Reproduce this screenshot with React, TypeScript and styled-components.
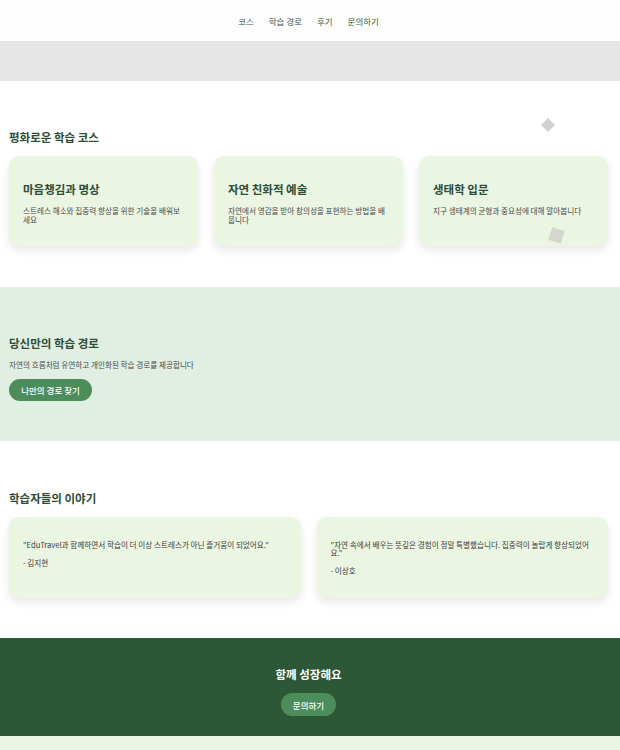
import React from "react";
import styled, { createGlobalStyle } from "styled-components";

const GlobalStyle = createGlobalStyle`
  html, body {
    margin: 0;
    padding: 0;
    background: #eaf5e3;
    font-family: "Noto Sans CJK KR", "Noto Sans", sans-serif;
  }
  * { box-sizing: border-box; }
`;

const Page = styled.div`
  width: 620px;
  position: relative;
`;

const Nav = styled.nav`
  height: 41px;
  background: #fdfdfd;
  display: flex;
  justify-content: center;
  align-items: center;
  gap: 15px;
  padding-right: 3px;
`;

const NavLink = styled.a`
  font-size: 8.5px;
  color: #3d5a43;
  text-decoration: none;
`;

const Hero = styled.div`
  height: 40px;
  background: #e5e5e5;
`;

const Section = styled.section<{ $bg: string; $pt: number; $pb: number }>`
  background: ${(p) => p.$bg};
  padding: ${(p) => p.$pt}px 12px ${(p) => p.$pb}px 9px;
  position: relative;
`;

const Title = styled.h2<{ $mb: number }>`
  margin: 0 0 ${(p) => p.$mb}px;
  font-size: 11.5px;
  line-height: 14px;
  font-weight: 700;
  color: #2e4d36;
`;

const CourseGrid = styled.div`
  display: grid;
  grid-template-columns: repeat(3, 1fr);
  gap: 16px;
`;

const Card = styled.div<{ $h: number; $pt: number }>`
  height: ${(p) => p.$h}px;
  background: #eaf5e2;
  border-radius: 10px;
  box-shadow: 0 4px 10px rgba(0, 0, 0, 0.1);
  padding: ${(p) => p.$pt}px 14px 0;
  position: relative;
`;

const CardTitle = styled.h3`
  margin: 0 0 9px;
  font-size: 11.5px;
  line-height: 16px;
  font-weight: 700;
  color: #2e4d36;
`;

const Desc = styled.p`
  margin: 0;
  font-size: 7.6px;
  line-height: 9px;
  color: #4a4a4a;
`;

const Sub = styled.p`
  margin: 0 0 9px;
  font-size: 7.6px;
  line-height: 10px;
  color: #4a4a4a;
`;

const PillButton = styled.button<{ $w: number; $h: number }>`
  display: block;
  width: ${(p) => p.$w}px;
  height: ${(p) => p.$h}px;
  border: none;
  border-radius: 999px;
  background: #4c8d5b;
  color: #ffffff;
  font-family: inherit;
  font-size: 8.5px;
  font-weight: 500;
  padding: 0;
`;

const ReviewGrid = styled.div`
  display: grid;
  grid-template-columns: 1fr 1fr;
  gap: 16px;
`;

const Quote = styled.p`
  margin: 0 0 10px;
  font-size: 7.6px;
  line-height: 8px;
  color: #3c3c3c;
`;

const Author = styled.p`
  margin: 0;
  font-size: 7.6px;
  line-height: 8px;
  color: #3c3c3c;
`;

const Footer = styled.footer`
  background: #2c5836;
  height: 98px;
  display: flex;
  flex-direction: column;
  align-items: center;
  padding: 28px 3px 0 0;
  gap: 11px;
`;

const FooterTitle = styled.h2`
  margin: 0;
  font-size: 11.5px;
  line-height: 16px;
  font-weight: 700;
  color: #ffffff;
`;

const Diamond = styled.div<{ $top: number; $left: number; $size: number; $rot: number; $alpha: number }>`
  position: absolute;
  top: ${(p) => p.$top}px;
  left: ${(p) => p.$left}px;
  width: ${(p) => p.$size}px;
  height: ${(p) => p.$size}px;
  background: rgba(195, 195, 195, ${(p) => p.$alpha});
  transform: rotate(${(p) => p.$rot}deg);
`;

const courses = [
  { title: "마음챙김과 명상", desc: "스트레스 해소와 집중력 향상을 위한 기술을 배워보세요" },
  { title: "자연 친화적 예술", desc: "자연에서 영감을 받아 창의성을 표현하는 방법을 배웁니다" },
  { title: "생태학 입문", desc: "지구 생태계의 균형과 중요성에 대해 알아봅니다" },
];

const reviews = [
  { quote: "\"EduTravel과 함께하면서 학습이 더 이상 스트레스가 아닌 즐거움이 되었어요.\"", author: "- 김지현" },
  { quote: "\"자연 속에서 배우는 뜻깊은 경험이 정말 특별했습니다. 집중력이 놀랍게 향상되었어요.\"", author: "- 이상호" },
];

export default function App() {
  return (
    <Page>
      <GlobalStyle />
      <Nav>
        <NavLink>코스</NavLink>
        <NavLink>학습 경로</NavLink>
        <NavLink>후기</NavLink>
        <NavLink>문의하기</NavLink>
      </Nav>
      <Hero />
      <Section $bg="#ffffff" $pt={49} $pb={41}>
        <Diamond $top={39} $left={543} $size={10} $rot={45} $alpha={0.75} />
        <Title $mb={12}>평화로운 학습 코스</Title>
        <CourseGrid>
          {courses.map((c) => (
            <Card key={c.title} $h={90} $pt={25}>
              <CardTitle>{c.title}</CardTitle>
              <Desc>{c.desc}</Desc>
            </Card>
          ))}
        </CourseGrid>
        <Diamond $top={148} $left={550} $size={13} $rot={18} $alpha={0.6} />
      </Section>
      <Section $bg="#e1efe3" $pt={49} $pb={40}>
        <Title $mb={10}>당신만의 학습 경로</Title>
        <Sub>자연의 흐름처럼 유연하고 개인화된 학습 경로를 제공합니다</Sub>
        <PillButton $w={83} $h={22}>나만의 경로 찾기</PillButton>
      </Section>
      <Section $bg="#ffffff" $pt={50} $pb={40}>
        <Title $mb={12}>학습자들의 이야기</Title>
        <ReviewGrid>
          {reviews.map((r) => (
            <Card key={r.author} $h={81} $pt={24}>
              <Quote>{r.quote}</Quote>
              <Author>{r.author}</Author>
            </Card>
          ))}
        </ReviewGrid>
      </Section>
      <Footer>
        <FooterTitle>함께 성장해요</FooterTitle>
        <PillButton $w={55} $h={23}>문의하기</PillButton>
      </Footer>
    </Page>
  );
}
